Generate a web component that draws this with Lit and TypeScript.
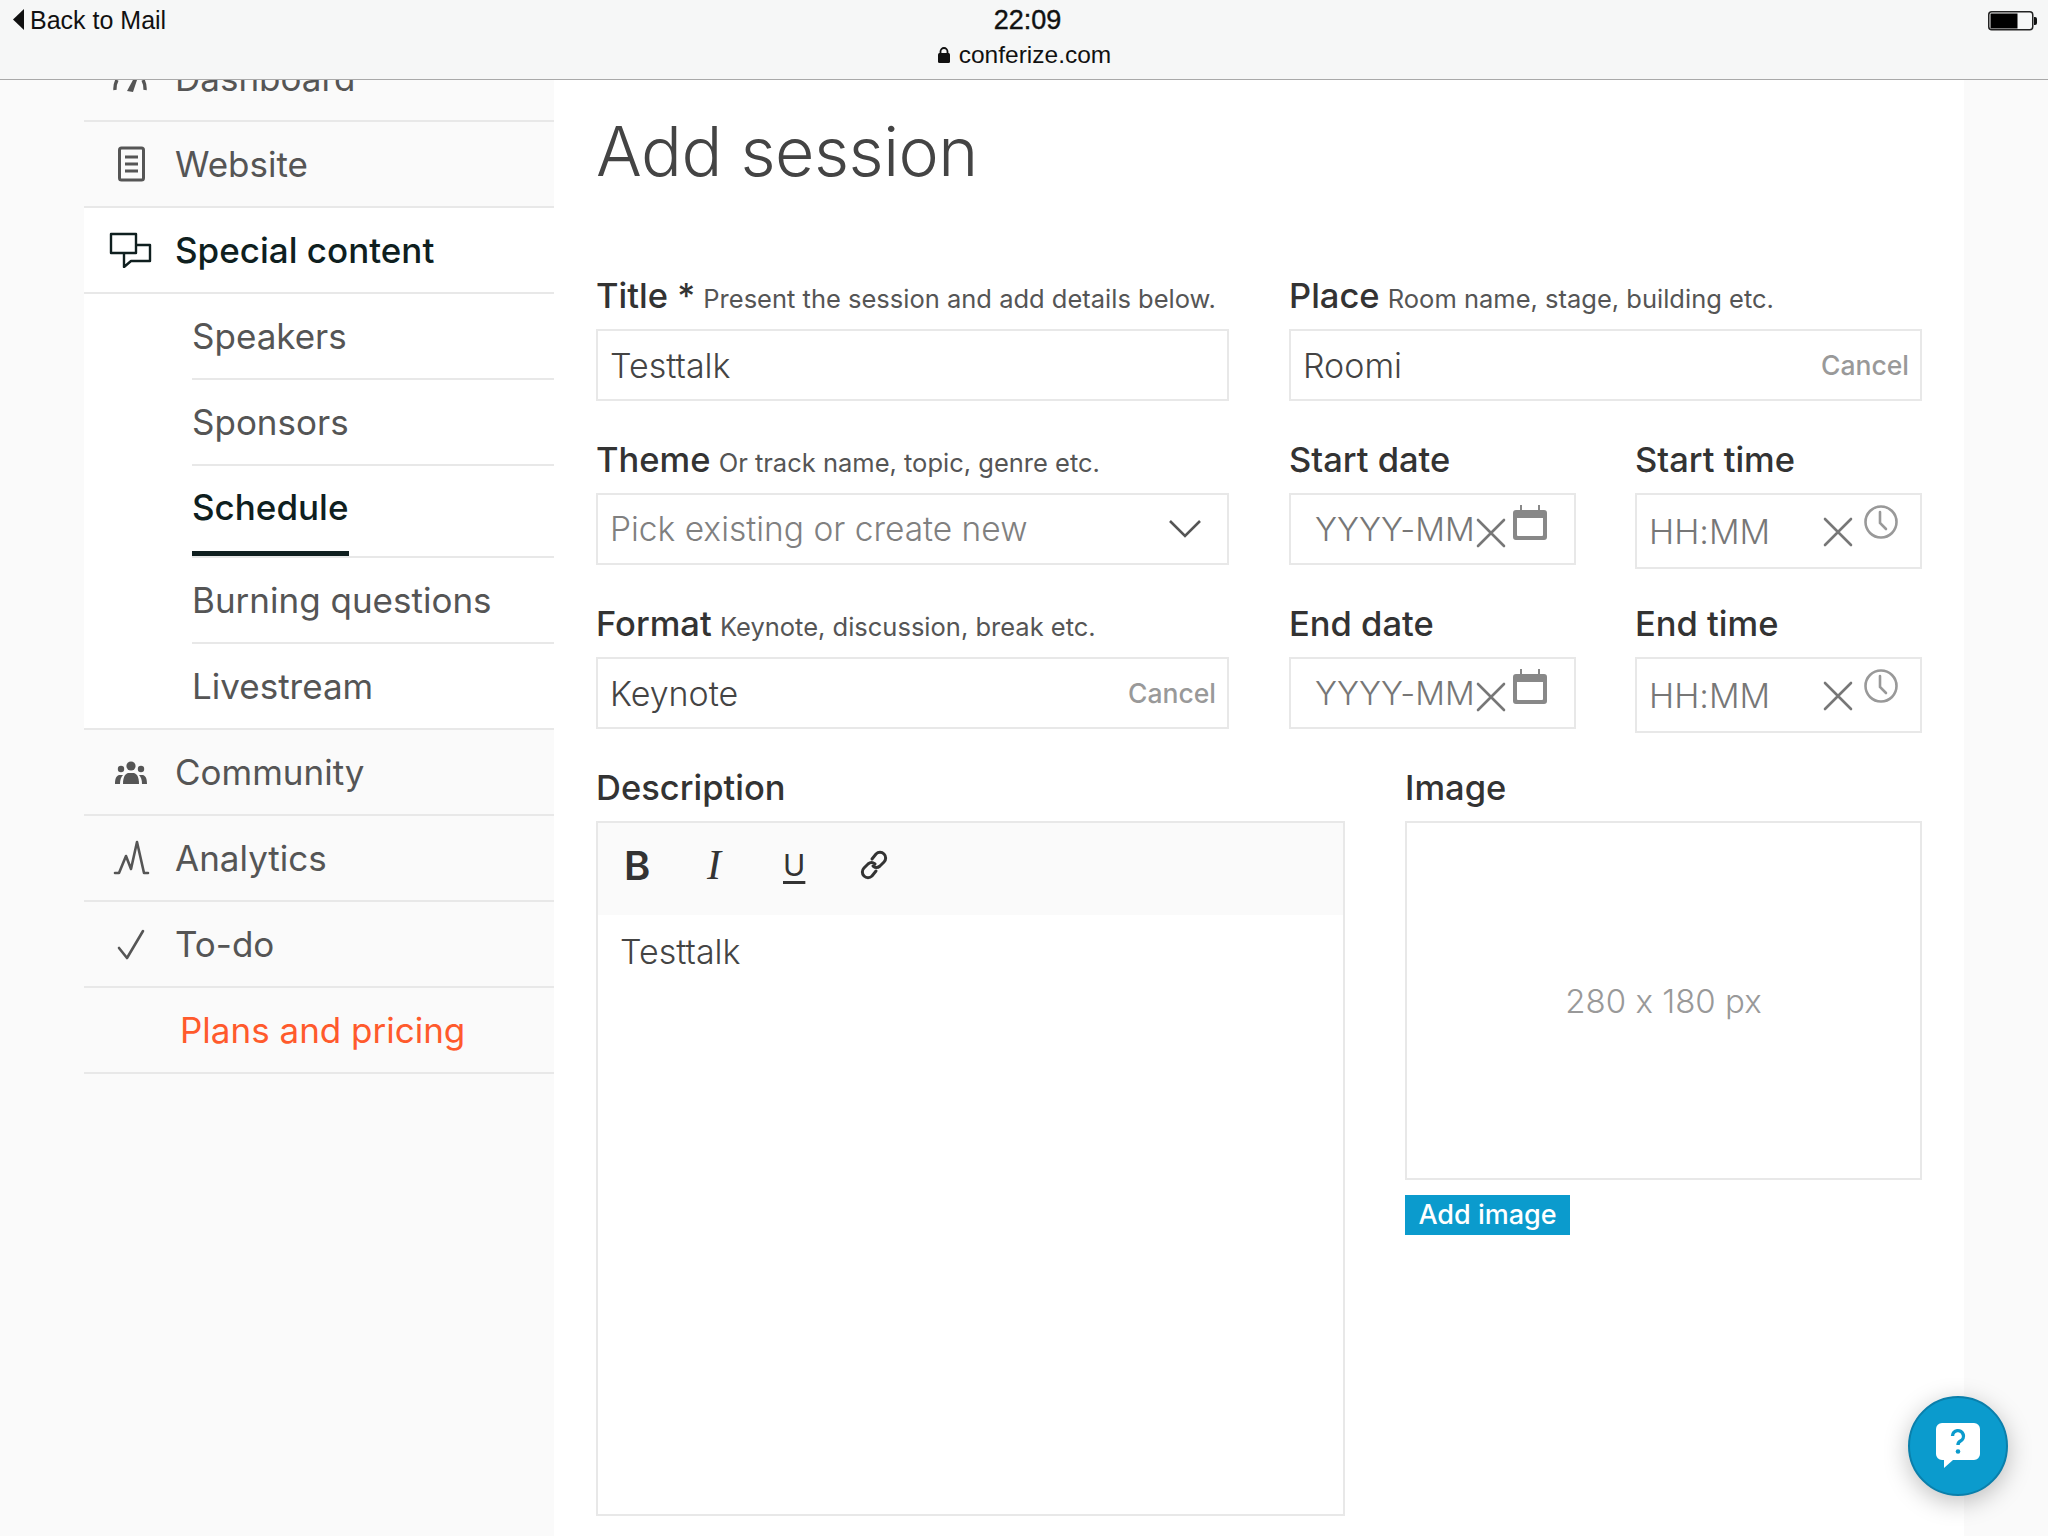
import { html, css, LitElement, svg } from 'lit';

const navIcons = {
  dashboard: svg`<path d="M6 30a19 19 0 0 1 2-10M36 30a19 19 0 0 0-2-10" fill="none" stroke="currentColor" stroke-width="3.4"/><path d="M18 31l7-13 3 2-4 12z" fill="currentColor"/>`,
  website: svg`<rect x="10.500" y="2" width="24" height="32" rx="2" fill="none" stroke="currentColor" stroke-width="3"/><path d="M16 11h13M16 18h13M16 25h13" stroke="currentColor" stroke-width="3"/>`,
  special: svg`<path d="M2 2h25v19H16l-5 0H2z" fill="none" stroke="currentColor" stroke-width="2.4" stroke-linejoin="round"/><path d="M27 13h14v16H22l-7 6v-14" fill="none" stroke="currentColor" stroke-width="2.4" stroke-linejoin="round"/>`,
  community: svg`<g fill="currentColor"><circle cx="22" cy="12" r="4.6"/><path d="M14 30c0-7 2-10 5-11h6c3 1 5 4 5 11z"/><circle cx="12" cy="15" r="3.2"/><path d="M11 30H6c0-5 1-8 4-9h4c-2 2-3 5-3 9z"/><circle cx="32" cy="15" r="3.2"/><path d="M33 30h5c0-5-1-8-4-9h-4c2 2 3 5 3 9z"/></g>`,
  analytics: svg`<path d="M6 33h4l7-17 5 13 6-27 7 31h4" fill="none" stroke="currentColor" stroke-width="2.6" stroke-linejoin="round" stroke-linecap="round"/>`,
  todo: svg`<path d="M10 22l8 10L34 5" fill="none" stroke="currentColor" stroke-width="2.6" stroke-linecap="round" stroke-linejoin="round"/>`,
};

const clearIcon = html`<svg class="clear" width="30" height="30" viewBox="0 0 30 30"><path d="M2 2l26 26M28 2L2 28" stroke="#777" stroke-width="2.6" stroke-linecap="round"/></svg>`;

const calendarIcon = html`<svg class="picker" width="34" height="35" viewBox="0 0 34 35"><path d="M3 5h28a3 3 0 0 1 3 3v24a3 3 0 0 1-3 3H3a3 3 0 0 1-3-3V8a3 3 0 0 1 3-3zM4 13v17a1 1 0 0 0 1 1h24a1 1 0 0 0 1-1V13z" fill="#888" fill-rule="evenodd"/><path d="M8 0v7M26 0v7" stroke="#888" stroke-width="2"/></svg>`;

const clockIcon = html`<svg class="picker" width="34" height="34" viewBox="0 0 34 34"><circle cx="17" cy="17" r="15.500" fill="none" stroke="#999" stroke-width="2.6"/><path d="M16 7v11l6 6" fill="none" stroke="#999" stroke-width="2.6" stroke-linecap="round"/></svg>`;

export default class AppRoot extends LitElement {
  static get styles() {
    return css`
      :host {
        display: block;
        width: 2048px;
        height: 1536px;
        overflow: hidden;
        position: relative;
        background: #fafafa;
        font-family: Inter, sans-serif;
        font-feature-settings: 'calt' 0;
        color: #555;
      }

      .status {
        height: 79px;
        border-bottom: 1.5px solid #a9a9a9;
        background: #f6f7f7;
        display: grid;
        grid-template-columns: 1fr auto 1fr;
        font-family: 'Liberation Sans', sans-serif;
        color: #111;
        position: relative;
        z-index: 2;
      }

      .back {
        display: flex;
        align-items: flex-start;
        gap: 6px;
        padding: 6px 0 0 13px;
        font-size: 25px;
        line-height: 28px;
      }

      .back svg {
        margin-top: 3px;
      }

      .clock {
        display: flex;
        flex-direction: column;
        align-items: center;
        padding-top: 6px;
        font-size: 24.500px;
        line-height: 28px;
      }

      .time {
        font-size: 27px;
        margin-left: 7px;
        -webkit-text-stroke: 0.4px #111;
      }

      .host {
        display: flex;
        align-items: center;
        gap: 8px;
        margin-top: 7px;
      }

      .battery {
        display: flex;
        justify-content: flex-end;
        padding: 11px 11px 0 0;
      }

      .layout {
        display: flex;
        height: 1456px;
        overflow: hidden;
        padding-left: 84px;
      }

      nav {
        width: 470px;
        flex: none;
        margin-top: -44px;
        font-size: 35px;
      }

      .row {
        height: 86px;
        box-sizing: border-box;
        border-bottom: 2px solid #e8e8e8;
        display: flex;
        align-items: center;
      }

      .row svg {
        width: 44px;
        height: 36px;
        margin-left: 25px;
        margin-right: 22px;
        flex: none;
      }

      .open {
        background: #fff;
        color: #0f1f1f;
        font-weight: 500;
      }

      .open svg {
        color: #0f1f1f;
      }

      .subnav {
        background: #fff;
        border-bottom: 2px solid #e8e8e8;
      }

      .sub {
        margin-left: 108px;
        height: 86px;
        box-sizing: border-box;
        border-bottom: 2px solid #e8e8e8;
        display: flex;
        align-items: center;
      }

      .sub:last-child {
        border-bottom: 0;
        height: 84px;
      }

      .sub.current {
        height: 92px;
        align-items: stretch;
      }

      .sub.current span {
        display: flex;
        align-items: center;
        height: 90px;
        box-sizing: border-box;
        padding-bottom: 4px;
        border-bottom: 5px solid #0f1f1f;
        color: #0f1f1f;
        font-weight: 500;
      }

      .pricing {
        color: #ff5a2c;
        padding-left: 96px;
      }

      main {
        width: 1410px;
        flex: none;
        box-sizing: border-box;
        background: #fff;
        padding: 21px 42px 0 42px;
      }

      h1 {
        margin: 0 0 74px;
        font-size: 68px;
        line-height: 100px;
        font-weight: 300;
        color: #444;
        letter-spacing: -0.5px;
      }

      .form {
        display: grid;
        grid-template-columns: 633px 287px 286px;
        column-gap: 60px;
        row-gap: 38px;
        align-items: start;
      }

      .col {
        grid-column: 2 / 4;
      }

      .form .left {
        grid-column: 1;
      }

      .pair {
        display: grid;
        grid-template-columns: 287px 287px;
        column-gap: 59px;
      }

      label {
        display: block;
        height: 54px;
        font-size: 34.500px;
        line-height: 42px;
        font-weight: 500;
        color: #333;
        white-space: nowrap;
      }

      label small {
        font-size: 25.500px;
        font-weight: 400;
        color: #555;
        margin-left: -1px;
      }

      .box {
        height: 72px;
        box-sizing: border-box;
        border: 2px solid #e8e8e8;
        background: #fff;
        display: flex;
        align-items: center;
        padding: 0 11px 0 12px;
        font-size: 34px;
        font-weight: 300;
        color: #444;
        justify-content: space-between;
      }

      .box.empty {
        color: #808080;
        font-size: 33.500px;
      }

      .cancel {
        font-size: 26.500px;
        font-weight: 500;
        color: #999;
      }

      .date {
        justify-content: flex-start;
        padding-left: 24px;
        padding-right: 0;
      }

      .box.date {
        font-size: 33px;
        color: #777;
      }

      .date .clear {
        margin-left: 1px;
        margin-top: 8px;
      }

      .date .picker {
        margin-left: 7px;
        margin-top: -14px;
      }

      .timebox {
        height: 76px;
        margin-bottom: -4px;
        justify-content: flex-start;
        padding-left: 12px;
        padding-right: 0;
      }

      .box.timebox {
        font-size: 34px;
        color: #777;
      }

      .timebox span {
        width: 174px;
      }

      .timebox .clear {
        margin-top: 1px;
      }

      .timebox .picker {
        margin-left: 11px;
        margin-top: -18px;
      }

      .lower {
        display: grid;
        grid-template-columns: 749px 517px;
        column-gap: 60px;
        margin-top: 38px;
      }

      .editor {
        height: 695px;
        box-sizing: border-box;
        border: 2px solid #e8e8e8;
      }

      .tools {
        height: 92px;
        padding-bottom: 8px;
        box-sizing: border-box;
        background: #fafafa;
        display: flex;
        align-items: center;
        color: #333;
        padding-left: 26px;
      }

      .tools span,
      .tools svg {
        flex: none;
      }

      .tool-b {
        font-size: 40px;
        font-weight: 600;
        width: 83px;
      }

      .tool-i {
        font-family: 'Liberation Serif', serif;
        font-style: italic;
        font-size: 42px;
        width: 76px;
      }

      .tool-u {
        font-size: 30px;
        font-weight: 400;
        text-decoration: underline;
        text-underline-offset: 5px;
        width: 76px;
      }

      .text {
        padding: 17px 22px;
        font-size: 34px;
        line-height: 40px;
        font-weight: 300;
        color: #444;
      }

      .image {
        height: 359px;
        box-sizing: border-box;
        border: 2px solid #e8e8e8;
        display: flex;
        align-items: center;
        justify-content: center;
        font-size: 33px;
        font-weight: 300;
        color: #999;
      }

      .add {
        width: 165px;
        height: 40px;
        margin-top: 15px;
        background: #0b9bcd;
        color: #fff;
        font-size: 27px;
        font-weight: 500;
        line-height: 40px;
        text-align: center;
      }

      .chevron {
        margin-right: 15px;
      }

      .right-rail {
        flex: 1;
      }

      .help {
        position: absolute;
        left: 1908px;
        top: 1396px;
        width: 100px;
        height: 100px;
        box-sizing: border-box;
        border-radius: 50%;
        background: #0b9bcd;
        border: 2px solid #0a7fab;
        box-shadow: 0 6px 24px rgba(0, 0, 0, 0.25);
        display: flex;
        align-items: center;
        justify-content: center;
        z-index: 3;
      }
    `;
  }

  renderNav(icon: keyof typeof navIcons, label: string, cls = '') {
    return html`<div class="row ${cls}">
      <svg viewBox="0 0 44 36">${navIcons[icon]}</svg>
      <span>${label}</span>
    </div>`;
  }

  renderDate(label: string) {
    return html`<div>
      <label>${label}</label>
      <div class="box date empty"><span>YYYY-MM</span>${clearIcon}${calendarIcon}</div>
    </div>`;
  }

  renderTime(label: string) {
    return html`<div>
      <label>${label}</label>
      <div class="box timebox empty"><span>HH:MM</span>${clearIcon}${clockIcon}</div>
    </div>`;
  }

  render() {
    return html`
      <div class="status">
        <div class="back">
          <svg width="11" height="21" viewBox="0 0 11 21"><path d="M11 0v21L0 10.500z" fill="#111"/></svg>
          <span>Back to Mail</span>
        </div>
        <div class="clock">
          <span class="time">22:09</span>
          <span class="host">
            <svg width="14" height="17" viewBox="0 0 14 17"><rect x="1" y="6" width="12" height="10" rx="1.500" fill="#111"/><path d="M3.500 7V4.500a3.500 3.500 0 0 1 7 0V7" fill="none" stroke="#111" stroke-width="1.800"/></svg>
            conferize.com
          </span>
        </div>
        <div class="battery">
          <svg width="49" height="20" viewBox="0 0 49 20">
            <rect x="0.750" y="0.750" width="44" height="18" rx="3" fill="none" stroke="#222" stroke-width="1.500"/>
            <rect x="2.500" y="2.500" width="27" height="15" fill="#000"/>
            <path d="M46 6h1a2 2 0 0 1 2 2v4a2 2 0 0 1-2 2h-1z" fill="#111"/>
          </svg>
        </div>
      </div>

      <div class="layout">
        <nav>
          ${this.renderNav('dashboard', 'Dashboard')}
          ${this.renderNav('website', 'Website')}
          ${this.renderNav('special', 'Special content', 'open')}
          <div class="subnav">
            <div class="sub"><span>Speakers</span></div>
            <div class="sub"><span>Sponsors</span></div>
            <div class="sub current"><span>Schedule</span></div>
            <div class="sub"><span>Burning questions</span></div>
            <div class="sub"><span>Livestream</span></div>
          </div>
          ${this.renderNav('community', 'Community')}
          ${this.renderNav('analytics', 'Analytics')}
          ${this.renderNav('todo', 'To-do')}
          <div class="row pricing"><span>Plans and pricing</span></div>
        </nav>

        <main>
          <h1>Add session</h1>
          <div class="form">
            <div class="left">
              <label>Title * <small>Present the session and add details below.</small></label>
              <div class="box">Testtalk</div>
            </div>
            <div class="col">
              <label>Place <small>Room name, stage, building etc.</small></label>
              <div class="box"><span>Roomi</span><span class="cancel">Cancel</span></div>
            </div>
            <div class="left">
              <label>Theme <small>Or track name, topic, genre etc.</small></label>
              <div class="box empty">
                <span>Pick existing or create new</span>
                <svg class="chevron" width="32" height="18" viewBox="0 0 32 18"><path d="M1 1l15 15L31 1" fill="none" stroke="#555" stroke-width="2.6"/></svg>
              </div>
            </div>
            <div class="col pair">
              ${this.renderDate('Start date')}
              ${this.renderTime('Start time')}
            </div>
            <div class="left">
              <label>Format <small>Keynote, discussion, break etc.</small></label>
              <div class="box"><span>Keynote</span><span class="cancel">Cancel</span></div>
            </div>
            <div class="col pair">
              ${this.renderDate('End date')}
              ${this.renderTime('End time')}
            </div>
          </div>

          <div class="lower">
            <div>
              <label>Description</label>
              <div class="editor">
                <div class="tools">
                  <span class="tool-b">B</span>
                  <span class="tool-i">I</span>
                  <span class="tool-u">U</span>
                  <svg width="30" height="30" viewBox="0 0 30 30" fill="none" stroke="#333" stroke-width="3" stroke-linecap="round">
                    <path d="M13 9l4-5a5.500 5.500 0 0 1 8 8l-4 4a5.500 5.500 0 0 1-7 0"/>
                    <path d="M17 21l-4 5a5.500 5.500 0 0 1-8-8l4-4a5.500 5.500 0 0 1 7 0"/>
                  </svg>
                </div>
                <div class="text">Testtalk</div>
              </div>
            </div>
            <div>
              <label>Image</label>
              <div class="image">280 x 180 px</div>
              <div class="add">Add image</div>
            </div>
          </div>
        </main>
        <div class="right-rail"></div>
      </div>

      <div class="help">
        <svg width="44" height="46" viewBox="0 0 44 46">
          <path d="M6 0h32a6 6 0 0 1 6 6v25a6 6 0 0 1-6 6H17l-9 8v-8H6a6 6 0 0 1-6-6V6a6 6 0 0 1 6-6z" fill="#fff"/>
          <path d="M16.500 13a5.500 5.500 0 1 1 8 5c-2 1-2.500 2-2.500 4" fill="none" stroke="#0b9bcd" stroke-width="3.400"/>
          <circle cx="22" cy="28.500" r="2.300" fill="#0b9bcd"/>
        </svg>
      </div>
    `;
  }
}

customElements.define('app-root', AppRoot);
